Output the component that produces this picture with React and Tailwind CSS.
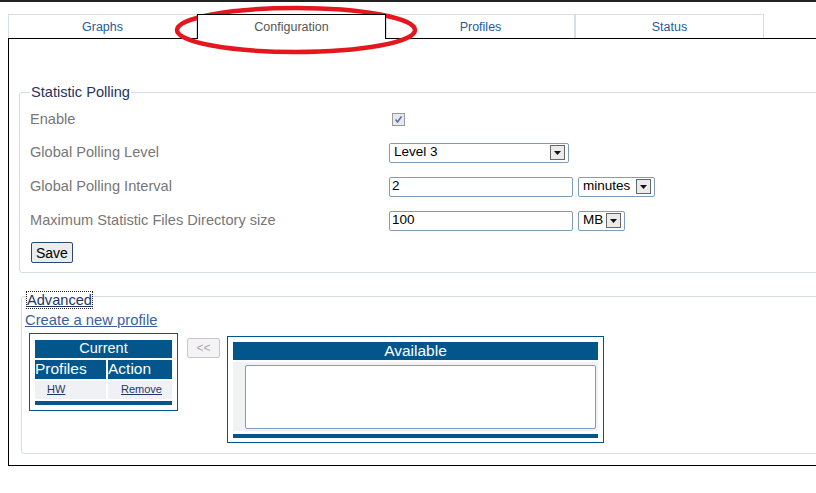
import React from 'react';

const font = { fontFamily: '"Liberation Sans", Arial, sans-serif' };

const Tab = ({ label, active }) => {
  if (active) {
    return (
      <div className="relative z-10 flex h-[25px] w-[189px] items-start justify-center border border-b-0 border-black bg-white pt-[3px] text-[12.5px] text-[#555]">
        {label}
      </div>
    );
  }
  return (
    <div className="flex h-[24px] w-[189px] items-start justify-center border border-b-0 border-[#d9dde5] pt-[3px] text-[12.5px] text-[#1f5c99]">
      {label}
    </div>
  );
};

const SelectBox = ({ value, width }) => (
  <div className={`flex h-[20px] items-center justify-between rounded-[2px] border border-[#7f9db9] bg-white pl-[4px] pr-[3px] text-[13.5px] text-black ${width}`}>
    <span>{value}</span>
    <span className="flex h-[15px] w-[15px] items-center justify-center border border-[#666] bg-[#ebebeb]">
      <svg width="7" height="4" viewBox="0 0 7 4">
        <path d="M0 0h7L3.5 4z" fill="#111" />
      </svg>
    </span>
  </div>
);

const TextBox = ({ value }) => (
  <div className="flex h-[20px] w-[184px] items-center rounded-[2px] border border-[#7f9db9] bg-white pl-[2px] text-[13.5px] text-black">
    {value}
  </div>
);

const Row = ({ label, height, children }) => (
  <div className={`flex items-center ${height}`}>
    <div className="w-[359px] text-[14.6px] text-[#777]">{label}</div>
    <div className="flex items-center gap-[5px]">{children}</div>
  </div>
);

export default function App() {
  return (
    <div className="relative h-[493px] w-[816px] overflow-hidden border-t-2 border-[#222] bg-white" style={font}>
      {/* tabs */}
      <div className="ml-[8px] mt-[12px] flex items-start">
        <Tab label="Graphs" />
        <Tab label="Configuration" active />
        <Tab label="Profiles" />
        <Tab label="Status" />
      </div>

      {/* panel */}
      <div className="-mt-px ml-[8px] h-[428px] w-[830px] border-b border-l border-t border-black">
        {/* Statistic Polling */}
        <fieldset className="ml-[10px] mt-[45px] rounded-[3px] border border-[#d5dce4] pb-[7px] pl-[10px] pt-[3px]">
          <legend className="px-[1px] text-[14.6px] leading-[16px] text-[#243461]">Statistic Polling</legend>
          <Row label="Enable" height="h-[33px]">
            <span className="ml-[3px] flex h-[13px] w-[13px] items-center justify-center border border-[#9a9a9a] bg-[#e6eaee]">
              <svg width="9" height="9" viewBox="0 0 9 9">
                <path d="M1.5 4.5l2 2.5L7.5 1.5" fill="none" stroke="#5a6fa8" strokeWidth="1.6" />
              </svg>
            </span>
          </Row>
          <Row label="Global Polling Level" height="h-[33px]">
            <SelectBox value="Level 3" width="w-[180px]" />
          </Row>
          <Row label="Global Polling Interval" height="h-[35px]">
            <TextBox value="2" />
            <SelectBox value="minutes" width="w-[77px]" />
          </Row>
          <Row label="Maximum Statistic Files Directory size" height="h-[33px]">
            <TextBox value="100" />
            <SelectBox value="MB" width="w-[47px]" />
          </Row>
          <button className="ml-[1px] mt-[5px] h-[21px] rounded-[2px] border border-[#2c4a70] bg-[#ececec] px-[4px] text-[14px] leading-none text-black">
            Save
          </button>
        </fieldset>

        {/* Advanced */}
        <fieldset className="ml-[12px] mt-[16px] rounded-[3px] border border-[#d5dce4] pb-[10px] pl-[3px] pt-[7px]">
          <legend className="relative top-[3px] ml-[2px] text-[14.6px] leading-[16px] text-[#243461] underline outline outline-1 outline-dotted outline-[#222]">
            Advanced
          </legend>
          <div className="text-[14.8px] leading-[16px] text-[#3b5f9c] underline">Create a new profile</div>

          <div className="mt-[5px] flex items-start">
            {/* Current */}
            <div className="ml-[4px] w-[149px] border border-[#02568c] px-[5px] pb-[5px] pt-[6px]">
              <div className="flex h-[18px] items-center justify-center bg-[#02568c] text-[14.5px] text-white">Current</div>
              <div className="mt-[2px] flex h-[19px] gap-[2px] text-[15.5px] text-white">
                <div className="flex w-[71px] items-center bg-[#02568c]">Profiles</div>
                <div className="flex flex-1 items-center bg-[#02568c]">Action</div>
              </div>
              <div className="mt-[2px] flex h-[18px] gap-[2px] text-[11px] text-[#24356a]">
                <div className="flex w-[71px] items-center bg-[#eff1f5] pl-[12px] underline">HW</div>
                <div className="flex flex-1 items-center bg-[#eff1f5] pl-[13px] underline">Remove</div>
              </div>
              <div className="mt-[2px] h-[4px] bg-[#02568c]" />
            </div>

            {/* move button */}
            <div className="ml-[9px] mt-[5px] flex h-[20px] w-[33px] items-center justify-center rounded-[2px] border border-[#c8c8c8] bg-[#f4f4f6] text-[12px] text-[#aaa]">
              &lt;&lt;
            </div>

            {/* Available */}
            <div className="ml-[7px] mt-[3px] w-[377px] border border-[#02568c] px-[5px] pb-[4px] pt-[5px]">
              <div className="flex h-[18px] items-center justify-center bg-[#02568c] text-[15.5px] text-white">Available</div>
              <div className="mt-[2px] h-[69px] bg-[#f0f2f6] pb-[2px] pl-[12px] pr-[2px] pt-[3px]">
                <div className="h-[64px] rounded-[2px] border border-[#7f9dbb] bg-white" />
              </div>
              <div className="mt-[3px] h-[4px] bg-[#02568c]" />
            </div>
          </div>
        </fieldset>
      </div>

      {/* red highlight around Configuration tab */}
      <svg className="pointer-events-none absolute left-0 top-0" width="816" height="60">
        <ellipse cx="296" cy="28" rx="119" ry="22" fill="none" stroke="#e5161d" strokeWidth="4.5" />
      </svg>
    </div>
  );
}
